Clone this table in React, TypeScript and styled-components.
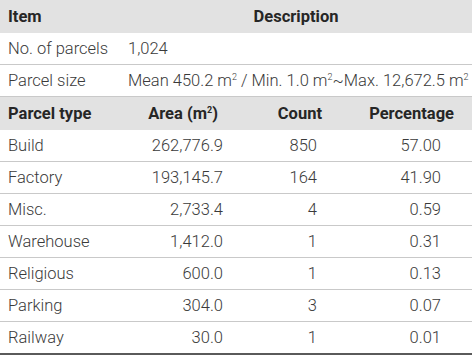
import React from 'react'
import styled, { createGlobalStyle } from 'styled-components'

const rows = [
  { type: 'Build', area: '262,776.9', count: '850', pct: '57.00' },
  { type: 'Factory', area: '193,145.7', count: '164', pct: '41.90' },
  { type: 'Misc.', area: '2,733.4', count: '4', pct: '0.59' },
  { type: 'Warehouse', area: '1,412.0', count: '1', pct: '0.31' },
  { type: 'Religious', area: '600.0', count: '1', pct: '0.13' },
  { type: 'Parking', area: '304.0', count: '3', pct: '0.07' },
  { type: 'Railway', area: '30.0', count: '1', pct: '0.01' },
]

export default function App() {
  return (
    <>
      <GlobalStyle />
      <Table>
        <InfoRow $head>
          <Cell $bold>Item</Cell>
          <Cell $bold $align='center'>Description</Cell>
        </InfoRow>
        <InfoRow>
          <Cell>No. of parcels</Cell>
          <Cell>1,024</Cell>
        </InfoRow>
        <InfoRow>
          <Cell>Parcel size</Cell>
          <Cell $pr={0}>
            Mean 450.2 m<Sup>2</Sup> / Min. 1.0 m<Sup>2</Sup>~Max. 12,672.5 m<Sup>2</Sup>
          </Cell>
        </InfoRow>
        <DataRow $head>
          <Cell $bold>Parcel type</Cell>
          <Cell $bold $align='right' $pr={13}>Area (m<Sup>2</Sup>)</Cell>
          <Cell $bold $align='right' $pr={47}>Count</Cell>
          <Cell $bold $align='right' $pr={18}>Percentage</Cell>
        </DataRow>
        {rows.map((r, i) => (
          <DataRow key={r.type} $last={i === rows.length - 1}>
            <Cell>{r.type}</Cell>
            <Cell $align='right'>{r.area}</Cell>
            <Cell $align='right' $pr={52}>{r.count}</Cell>
            <Cell $align='right' $pr={31}>{r.pct}</Cell>
          </DataRow>
        ))}
      </Table>
    </>
  )
}

const GlobalStyle = createGlobalStyle`
  html, body {
    margin: 0;
    padding: 0;
    background: #ffffff;
  }
  body {
    font-family: Roboto, 'Liberation Sans', sans-serif;
    color: #3a3a3a;
  }
`

const Table = styled.div`
  width: 472px;
  display: flex;
  flex-direction: column;
`

const Row = styled.div<{ $head?: boolean; $last?: boolean }>`
  display: grid;
  align-items: center;
  height: ${p => (p.$head ? '33px' : '31px')};
  background: ${p => (p.$head ? '#e2e2e2' : '#ffffff')};
  border-bottom: ${p => (p.$last ? '2px solid #5a5a5a' : p.$head ? 'none' : '1px solid #c9c9c9')};
`

const InfoRow = styled(Row)`
  grid-template-columns: 120px 352px;
`

const DataRow = styled(Row)`
  grid-template-columns: 120px 111px 138px 103px;
`

const Cell = styled.div<{ $bold?: boolean; $align?: string; $pr?: number }>`
  padding: 0 ${p => (p.$pr ?? 8)}px 0 ${p => (p.$align === 'right' ? 0 : 8)}px;
  font-size: 16.5px;
  line-height: 20px;
  font-weight: ${p => (p.$bold ? 700 : 300)};
  color: ${p => (p.$bold ? '#262626' : '#3a3a3a')};
  text-align: ${p => p.$align || 'left'};
  white-space: nowrap;
`

const Sup = styled.sup`
  font-size: 9px;
  line-height: 0;
  vertical-align: 6px;
`
